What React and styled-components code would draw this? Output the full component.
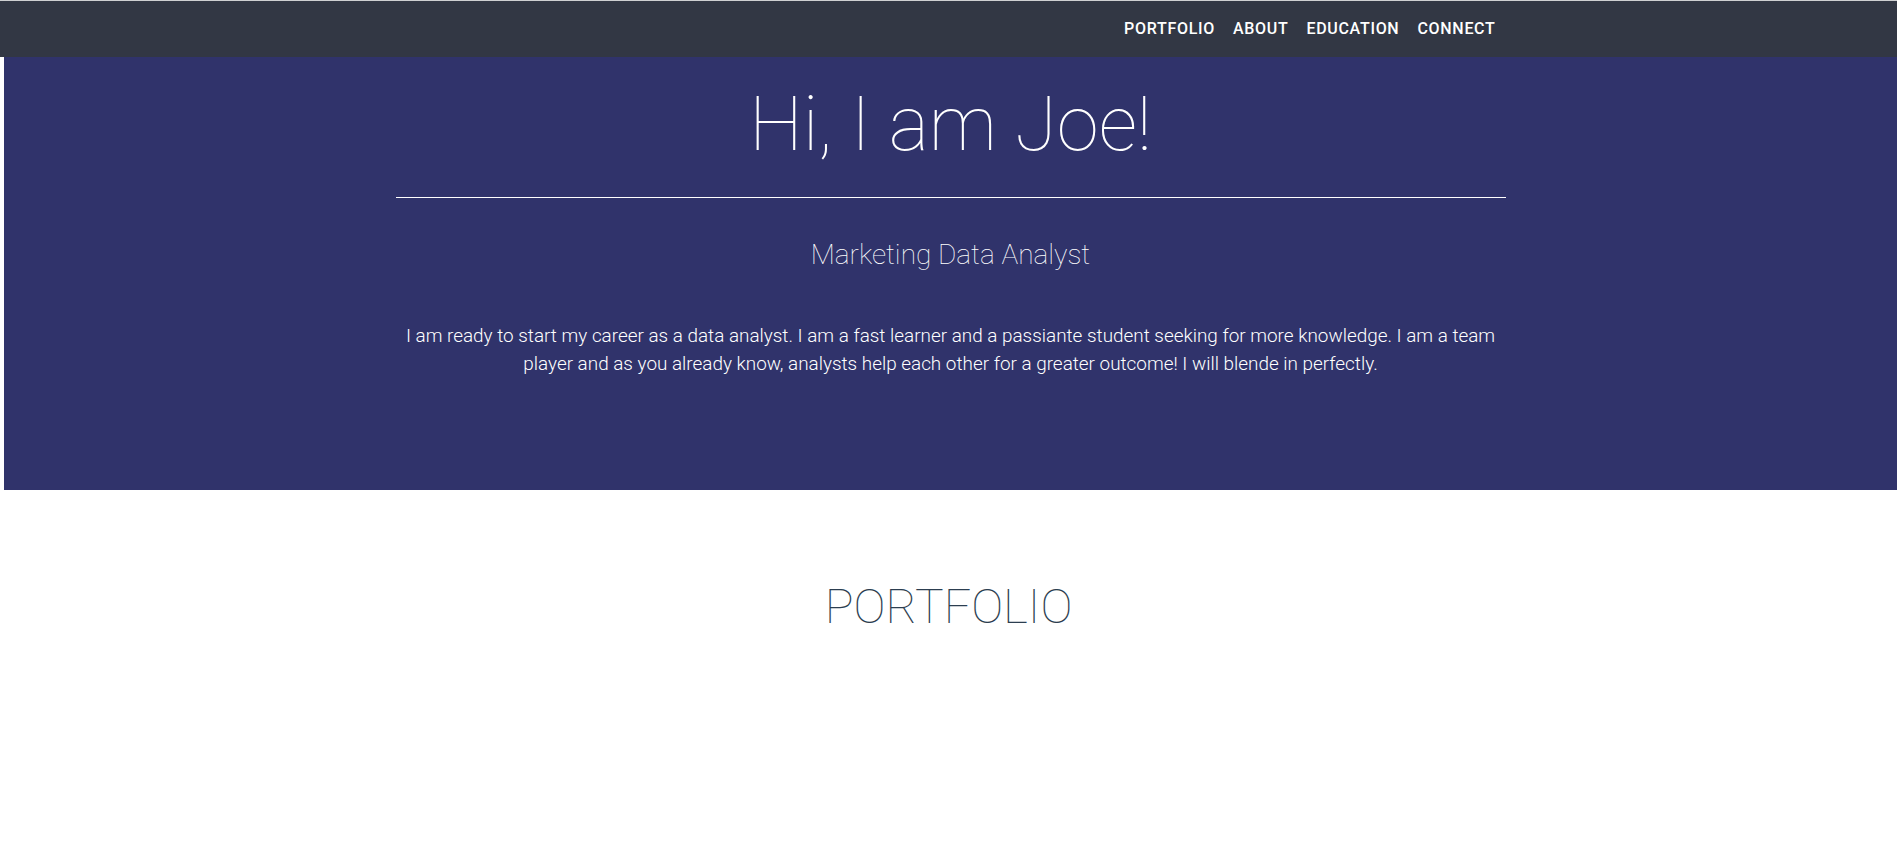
import React from 'react';
import styled, {createGlobalStyle} from 'styled-components';

const GlobalStyle = createGlobalStyle`
  * {
    box-sizing: border-box;
  }

  body {
    margin: 0;
    font-family: Roboto, "Liberation Sans", sans-serif;
    background: #fff;
    border-top: 1px solid #cfd0d2;
  }
`;

const links = ['Portfolio', 'About', 'Education', 'Connect'];

const App = () => {
    return (
        <>
            <GlobalStyle/>
            <NavBar>
                <Container>
                    <NavList>
                        {
                            links.map((item) => (
                                <li key={item}>
                                    <NavLink href={`#${item.toLowerCase()}`}>{item}</NavLink>
                                </li>
                            ))
                        }
                    </NavList>
                </Container>
            </NavBar>
            <Hero>
                <Container>
                    <Title>Hi, I am Joe!</Title>
                    <Divider/>
                    <Subtitle>Marketing Data Analyst</Subtitle>
                    <Intro>
                        I am ready to start my career as a data analyst. I am a fast learner and a passiante
                        student seeking for more knowledge. I am a team player and as you already know, analysts
                        help each other for a greater outcome! I will blende in perfectly.
                    </Intro>
                </Container>
            </Hero>
            <Section id="portfolio">
                <SectionTitle>Portfolio</SectionTitle>
            </Section>
        </>
    )
}

const Container = styled.div`
  width: 1140px;
  margin: 0 auto;
  padding: 0 15px;
`;

const NavBar = styled.nav`
  background: #323744;
  height: 56px;
  display: flex;
  align-items: center;
`;

const NavList = styled.ul`
  display: flex;
  justify-content: flex-end;
  list-style: none;
  margin: 0;
  padding: 0;
`;

const NavLink = styled.a`
  display: block;
  padding: 8px 8px 8px 10px;
  font-size: 16px;
  font-weight: 460;
  letter-spacing: 0.7px;
  line-height: 24px;
  text-transform: uppercase;
  text-decoration: none;
  color: #fff;
`;

const Hero = styled.header`
  margin-left: 4px;
  background: #30336b;
  color: #fff;
  text-align: center;
  padding: 22px 0 112px;
`;

const Title = styled.h1`
  margin: 0;
  font-size: 76px;
  font-weight: 100;
  line-height: 1.2;
`;

const Divider = styled.hr`
  margin: 27px 0 0;
  border: 0;
  border-top: 1px solid #fff;
`;

const Subtitle = styled.h3`
  margin: 40px 0 50px;
  font-size: 28px;
  font-weight: 270;
  line-height: 1.2;
`;

const Intro = styled.p`
  margin: 0;
  font-size: 18.9px;
  font-weight: 280;
  line-height: 28px;
`;

const Section = styled.section`
  padding-top: 88px;
  text-align: center;
`;

const SectionTitle = styled.h2`
  margin: 0;
  font-size: 48px;
  font-weight: 100;
  line-height: 1.2;
  text-transform: uppercase;
  color: #2c3e50;
`;

export default App;
